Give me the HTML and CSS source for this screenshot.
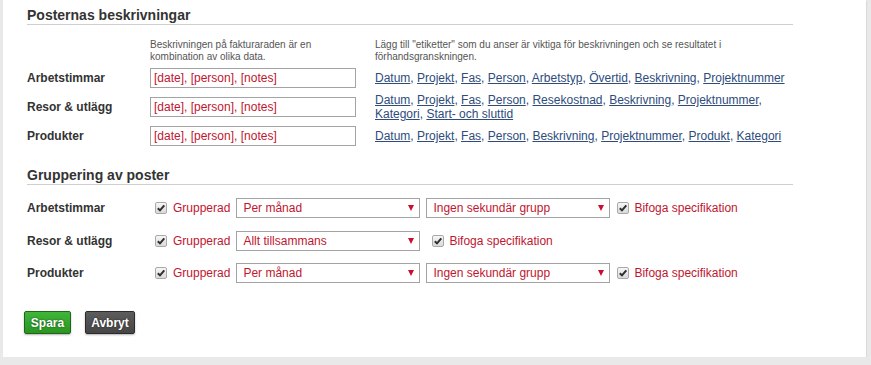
FILE: index.html
```html
<!DOCTYPE html>
<html lang="sv">
<head>
  <meta charset="UTF-8">
  <title>Fakturainställningar</title>
  <link rel="stylesheet" href="styles.css">
</head>
<body>
  <div class="panel">
    <section class="block">
      <h2 class="block-title">Posternas beskrivningar</h2>

      <div class="desc-grid">
        <span></span>
        <p class="hint">Beskrivningen på fakturaraden är en kombination av olika data.</p>
        <p class="hint hint-tags">Lägg till "etiketter" som du anser är viktiga för beskrivningen och se resultatet i förhandsgranskningen.</p>

        <label class="row-label" for="descHours">Arbetstimmar</label>
        <input class="desc-input" id="descHours" type="text" value="[date], [person], [notes]">
        <div class="tags">
          <a href="#">Datum</a>, <a href="#">Projekt</a>, <a href="#">Fas</a>, <a href="#">Person</a>, <a href="#">Arbetstyp</a>, <a href="#">Övertid</a>, <a href="#">Beskrivning</a>, <a href="#">Projektnummer</a>
        </div>

        <label class="row-label" for="descTravel">Resor &amp; utlägg</label>
        <input class="desc-input" id="descTravel" type="text" value="[date], [person], [notes]">
        <div class="tags">
          <a href="#">Datum</a>, <a href="#">Projekt</a>, <a href="#">Fas</a>, <a href="#">Person</a>, <a href="#">Resekostnad</a>, <a href="#">Beskrivning</a>, <a href="#">Projektnummer</a>, <a href="#">Kategori</a>, <a href="#">Start- och sluttid</a>
        </div>

        <label class="row-label" for="descProducts">Produkter</label>
        <input class="desc-input" id="descProducts" type="text" value="[date], [person], [notes]">
        <div class="tags">
          <a href="#">Datum</a>, <a href="#">Projekt</a>, <a href="#">Fas</a>, <a href="#">Person</a>, <a href="#">Beskrivning</a>, <a href="#">Projektnummer</a>, <a href="#">Produkt</a>, <a href="#">Kategori</a>
        </div>
      </div>
    </section>

    <section class="block block-group">
      <h2 class="block-title">Gruppering av poster</h2>

      <div class="group-list">
        <div class="group-row">
          <span class="row-label">Arbetstimmar</span>
          <label class="check check-group"><span class="box"><svg viewBox="0 0 10 10"><path d="M1.8 5.2 L4 7.4 L8.3 2.4"/></svg></span>Grupperad</label>
          <div class="select">
            <select><option>Per månad</option><option>Allt tillsammans</option></select>
          </div>
          <div class="select select-second">
            <select><option>Ingen sekundär grupp</option></select>
          </div>
          <label class="check check-spec"><span class="box"><svg viewBox="0 0 10 10"><path d="M1.8 5.2 L4 7.4 L8.3 2.4"/></svg></span>Bifoga specifikation</label>
        </div>

        <div class="group-row">
          <span class="row-label">Resor &amp; utlägg</span>
          <label class="check check-group"><span class="box"><svg viewBox="0 0 10 10"><path d="M1.8 5.2 L4 7.4 L8.3 2.4"/></svg></span>Grupperad</label>
          <div class="select">
            <select><option>Allt tillsammans</option><option>Per månad</option></select>
          </div>
          <label class="check check-spec check-wide"><span class="box"><svg viewBox="0 0 10 10"><path d="M1.8 5.2 L4 7.4 L8.3 2.4"/></svg></span>Bifoga specifikation</label>
        </div>

        <div class="group-row">
          <span class="row-label">Produkter</span>
          <label class="check check-group"><span class="box"><svg viewBox="0 0 10 10"><path d="M1.8 5.2 L4 7.4 L8.3 2.4"/></svg></span>Grupperad</label>
          <div class="select">
            <select><option>Per månad</option><option>Allt tillsammans</option></select>
          </div>
          <div class="select select-second">
            <select><option>Ingen sekundär grupp</option></select>
          </div>
          <label class="check check-spec"><span class="box"><svg viewBox="0 0 10 10"><path d="M1.8 5.2 L4 7.4 L8.3 2.4"/></svg></span>Bifoga specifikation</label>
        </div>
      </div>
    </section>

    <div class="actions">
      <button class="btn btn-save" type="button">Spara</button>
      <button class="btn btn-cancel" type="button">Avbryt</button>
    </div>
  </div>
</body>
</html>
```

FILE: styles.css
```css
body {
  margin: 0;
  padding: 0;
  background: #e9e9e9;
  font-family: "Liberation Sans", Arial, sans-serif;
  font-size: 12px;
  color: #333;
}

.panel {
  background: #fff;
  width: 842px;
  margin-left: 3px;
  padding: 7px 0 23px 21px;
  box-shadow: 1px 1px 1px rgba(0, 0, 0, 0.06);
}

.block {
  margin-left: 3px;
  width: 766px;
}

.block-title {
  margin: 0;
  font-size: 14px;
  line-height: 17px;
  font-weight: bold;
  color: #333;
  border-bottom: 1px solid #cfcfcf;
}

/* beskrivningar */

.desc-grid {
  display: grid;
  grid-template-columns: 123px 206px 1fr;
  row-gap: 5px;
  align-items: center;
  margin-top: 14px;
}

.hint {
  margin: 0;
  font-size: 10px;
  line-height: 12px;
  color: #555;
  align-self: start;
}

.hint-tags,
.tags {
  margin-left: 19px;
}

.row-label {
  font-weight: bold;
  font-size: 12px;
  color: #333;
}

.desc-input {
  box-sizing: border-box;
  width: 206px;
  height: 20px;
  margin: 0;
  padding: 0 3px;
  border: 1px solid #a3a3a3;
  font-family: inherit;
  font-size: 12px;
  color: #c0162f;
  outline: none;
}

.tags {
  line-height: 14px;
  color: #2e4c7c;
}

.tags a {
  color: #2e4c7c;
  text-decoration: underline;
}

/* gruppering */

.block-group {
  margin-top: 21px;
}

.group-list {
  display: flex;
  flex-direction: column;
  gap: 12.5px;
  margin-top: 13px;
}

.group-row {
  display: flex;
  align-items: center;
  height: 20px;
}

.group-row .row-label {
  width: 123px;
  flex-shrink: 0;
  font-weight: bold;
}

.check {
  display: flex;
  align-items: center;
  color: #c0162f;
  white-space: nowrap;
}

.box {
  box-sizing: border-box;
  width: 12px;
  height: 12px;
  border: 1px solid #a9a9a9;
  border-radius: 2px;
  background: linear-gradient(#f6f6f6, #dadada);
  display: flex;
  align-items: center;
  justify-content: center;
}

.box svg {
  width: 10px;
  height: 10px;
}

.box path {
  fill: none;
  stroke: #2f2f2f;
  stroke-width: 2;
}

.check-group {
  margin-left: 5px;
  gap: 6px;
}

.check-spec {
  margin-left: 7px;
  gap: 5px;
}

.check-wide {
  margin-left: 12px;
}

.select {
  position: relative;
  margin-left: 6px;
  width: 184px;
  height: 20px;
}

.select select {
  appearance: none;
  -webkit-appearance: none;
  box-sizing: border-box;
  width: 100%;
  height: 20px;
  margin: 0;
  padding: 0 18px 0 6px;
  border: 1px solid #a3a3a3;
  border-radius: 0;
  background: #fff;
  font-family: inherit;
  font-size: 12px;
  color: #c0162f;
  outline: none;
}

.select::after {
  content: "";
  position: absolute;
  right: 6px;
  top: 7px;
  border-left: 3.5px solid transparent;
  border-right: 3.5px solid transparent;
  border-top: 6px solid #c8102e;
  pointer-events: none;
}

/* knappar */

.actions {
  display: flex;
  gap: 14px;
  margin-top: 28px;
}

.btn {
  height: 23px;
  padding: 0;
  border-radius: 2px;
  font-family: inherit;
  font-size: 12px;
  font-weight: bold;
  color: #fff;
  text-shadow: 0 0 2px rgba(0, 0, 0, 0.6);
  cursor: pointer;
  box-shadow: 0 1px 2px rgba(0, 0, 0, 0.3);
}

.btn-save {
  width: 47px;
  background: linear-gradient(#40b53a, #29961f);
  border: 1px solid #22641c;
}

.btn-cancel {
  width: 50px;
  background: linear-gradient(#5c5c5c, #464646);
  border: 1px solid #2b2b2b;
}
```
